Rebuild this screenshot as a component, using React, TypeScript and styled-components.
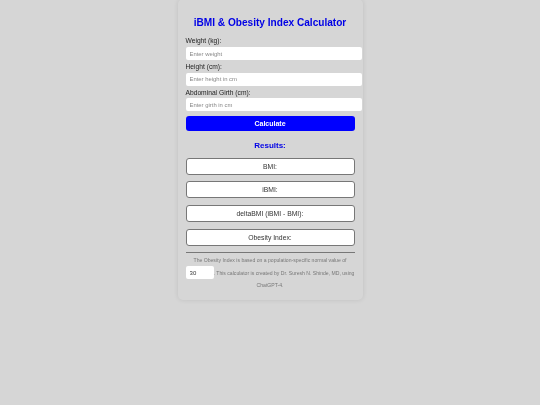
import styled, { createGlobalStyle } from "styled-components";

const GlobalStyle = createGlobalStyle`
    html, body {
        margin: 0;
        background-color: #d6d6d6;
        font-family: "Liberation Sans", Arial, sans-serif;
    }
`

const results = ["BMI:", "iBMI:", "deltaBMI (iBMI - BMI):", "Obesity Index:"];

export default function App() {
    return (
        <>
            <GlobalStyle/>
            <Page>
                <Card>
                    <Title>iBMI &amp; Obesity Index Calculator</Title>
                    <Label>Weight (kg):</Label>
                    <Input placeholder="Enter weight"/>
                    <Label>Height (cm):</Label>
                    <Input placeholder="Enter height in cm"/>
                    <Label>Abdominal Girth (cm):</Label>
                    <Input placeholder="Enter girth in cm"/>
                    <CalcButton>Calculate</CalcButton>
                    <ResultsTitle>Results:</ResultsTitle>
                    <ResultList>
                        {results.map(r => <ResultBox key={r}>{r}</ResultBox>)}
                    </ResultList>
                    <Divider/>
                    <Note>
                        The Obesity Index is based on a population-specific normal value of{" "}
                        <NormalInput defaultValue="30"/>. This calculator is created by Dr. Suresh N. Shinde, MD, using ChatGPT-4.
                    </Note>
                </Card>
            </Page>
        </>
    );
}

const Page = styled.div`
    display: flex;
    justify-content: center;
    min-height: 405px;
    will-change: transform;
`
const Card = styled.div`
    width: 169px;
    padding: 9px 8px 9px;
    margin-top: -1px;
    align-self: flex-start;
    border-radius: 5px;
    box-shadow: 0 0 5px rgba(0, 0, 0, 0.1);
`
const Title = styled.h1`
    margin: 8px 0 7.3px;
    font-size: 10.1px;
    line-height: 13px;
    font-weight: bold;
    color: #0000e6;
    text-align: center;
    white-space: nowrap;
`
const Label = styled.label`
    display: block;
    font-size: 6.7px;
    line-height: 10.7px;
    color: #222;
`
const Input = styled.input`
    display: block;
    box-sizing: content-box;
    width: 100%;
    height: 13px;
    padding: 0 3px 0 4px;
    margin: 0 0 2px;
    border: none;
    border-radius: 2px;
    background-color: #fff;
    font-family: inherit;
    font-size: 5.9px;
    color: #333;
    outline: none;

    &::placeholder {
        color: #888;
    }
`
const CalcButton = styled.button`
    display: block;
    width: 100%;
    height: 15px;
    margin-top: 4.5px;
    padding: 0;
    border: none;
    border-radius: 3px;
    background-color: #0000ff;
    color: #fff;
    font-family: inherit;
    font-size: 7px;
    font-weight: bold;
`
const ResultsTitle = styled.h2`
    margin: 9px 0 6.6px;
    font-size: 8px;
    line-height: 11px;
    font-weight: bold;
    color: #0000e6;
    text-align: center;
`
const ResultList = styled.div`
    display: flex;
    flex-direction: column;
    gap: 6.4px;
`
const ResultBox = styled.div`
    box-sizing: border-box;
    height: 17.3px;
    border: 1px solid #777;
    border-radius: 3px;
    background-color: #fff;
    font-size: 6.8px;
    line-height: 15.3px;
    color: #333;
    text-align: center;
`
const Divider = styled.hr`
    margin: 6.6px 0 0;
    border: none;
    border-top: 1px solid #777;
`
const Note = styled.p`
    margin: 0.7px 0 0;
    font-size: 5.1px;
    line-height: 12px;
    color: #777;
    text-align: center;
`
const NormalInput = styled.input`
    box-sizing: content-box;
    width: 20px;
    height: 13px;
    padding: 0 4px;
    margin: 0;
    border: none;
    border-radius: 2px;
    background-color: #fff;
    font-family: inherit;
    font-size: 6px;
    color: #333;
    outline: none;
`
